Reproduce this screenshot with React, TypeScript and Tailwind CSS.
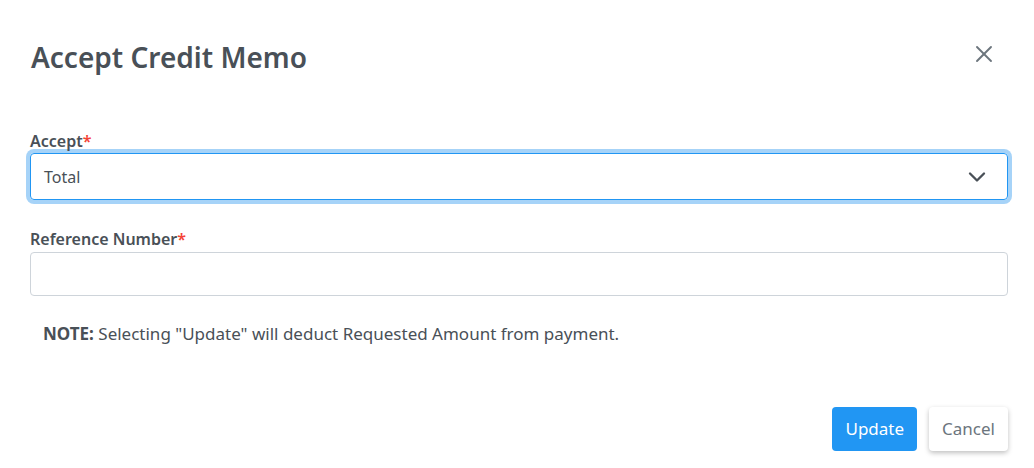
import { X, ChevronDown } from "lucide-react";

export default function App() {
  return (
    <div
      className="w-[1034px] h-[468px] bg-white text-[#495057] overflow-hidden"
      style={{ fontFamily: '"Noto Sans", "Open Sans", sans-serif' }}
    >
      <div className="flex items-center justify-between pl-[31px] pr-[36px] pt-[36px]">
        <h2 className="text-[28px] leading-[42px] font-semibold text-[#495057]">Accept Credit Memo</h2>
        <button className="-mt-[6px] text-[#6c757d]">
          <X size={28} strokeWidth={1.6} />
        </button>
      </div>

      <div className="px-[30px] pr-[26px] pt-[51px]">
        <label className="block text-[16px] leading-[24px] font-semibold">
          Accept<span className="text-[#f44336]">*</span>
        </label>
        <div className="flex h-[47px] items-center justify-between rounded-[4px] border border-[#2196f3] pl-[13px] pr-[16px] ring-4 ring-[#a6d3f8]">
          <span className="text-[16px]">Total</span>
          <ChevronDown size={28} strokeWidth={2} className="text-[#495057]" />
        </div>

        <label className="mt-[27px] block text-[16px] leading-[24px] font-semibold">
          Reference Number<span className="text-[#f44336]">*</span>
        </label>
        <input
          type="text"
          className="mt-[1px] block h-[44px] w-full rounded-[4px] border border-[#ced4da] px-3 text-[16px] outline-none"
        />

        <p className="mt-[26px] pl-[13px] text-[17px] leading-[24px]">
          <b className="font-bold">NOTE:</b> Selecting "Update" will deduct Requested Amount from payment.
        </p>

        <div className="mt-[61px] flex justify-end gap-[12px]">
          <button className="h-[44px] rounded-[4px] bg-[#2196f3] px-[13px] text-[17px] text-white">Update</button>
          <button className="h-[44px] rounded-[4px] bg-white px-[13px] text-[17px] text-[#6c757d] shadow-[0_2px_5px_rgba(0,0,0,0.25)]">
            Cancel
          </button>
        </div>
      </div>
    </div>
  );
}
